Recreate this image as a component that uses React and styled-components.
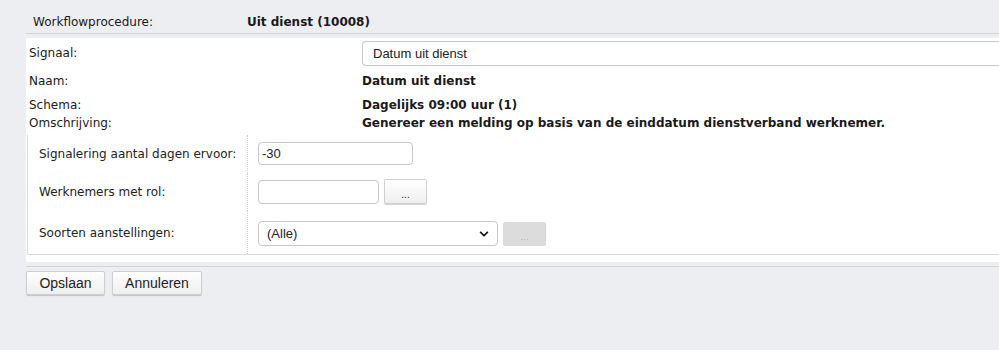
import React from 'react';
import styled, { createGlobalStyle } from 'styled-components';
import { FaChevronDown } from 'react-icons/fa';

const Global = createGlobalStyle`
    html, body{
        margin: 0;
        padding: 0;
        background: #edeef2;
        overflow: hidden;
    }
    body{
        font-family: "DejaVu Sans", Verdana, sans-serif;
        font-size: 12px;
        color: #1a1a1a;
    }
`;

const Page = styled.div`
    width: 999px;
    height: 350px;
    padding-left: 26px;
    box-sizing: border-box;
    overflow: hidden;
`;

const HeaderRow = styled.div`
    display: flex;
    padding: 13px 0 2px 7px;
    line-height: 18px;
    border-bottom: 1px solid #d2d3d6;
`;

const HeaderLabel = styled.div`
    width: 214px;
`;

const Bold = styled.div`
    font-weight: bold;
`;

const Panel = styled.div`
    margin-top: 4px;
    background: #ffffff;
    padding: 2px 0 7px 0;
`;

const InfoRow = styled.div`
    display: flex;
    align-items: center;
    height: ${(p) => p.h}px;
    padding-left: 3px;
`;

const InfoLabel = styled.div`
    width: 333px;
    flex-shrink: 0;
`;

const WideInput = styled.div`
    width: 700px;
    height: 25px;
    box-sizing: border-box;
    border: 1px solid #c8c8c8;
    border-right: none;
    border-radius: 4px 0 0 4px;
    padding-left: 10px;
    display: flex;
    align-items: center;
    font-family: "Liberation Sans", Arial, sans-serif;
    font-size: 13px;
    color: #222;
    flex-shrink: 0;
`;

const SubBox = styled.div`
    margin: 3px 0 0 1px;
    border-left: 1px solid #dcdcdc;
    border-bottom: 1px solid #dcdcdc;
`;

const SubRow = styled.div`
    display: flex;
    align-items: stretch;
`;

const SubLabel = styled.div`
    width: 208px;
    padding-left: 11px;
    flex-shrink: 0;
    display: flex;
    align-items: center;
    color: #222;
    border-right: 1px dotted #d0d0d0;
`;

const SubValue = styled.div`
    display: flex;
    align-items: center;
    gap: 5px;
    padding: ${(p) => p.pad};
    padding-left: 10px;
`;

const TextField = styled.div`
    width: ${(p) => p.w}px;
    height: ${(p) => p.h}px;
    box-sizing: border-box;
    border: 1px solid #c8c8c8;
    border-radius: 4px;
    padding-left: 3px;
    display: flex;
    align-items: center;
    font-family: "Liberation Sans", Arial, sans-serif;
    font-size: 13px;
    color: #222;
`;

const Select = styled(TextField)`
    padding: 0 8px;
    justify-content: space-between;
    svg{
        font-size: 10px;
        color: #111;
    }
`;

const Button = styled.button`
    width: ${(p) => p.w}px;
    height: ${(p) => p.h || 24}px;
    box-sizing: border-box;
    border: 1px solid ${(p) => (p.disabled ? '#dadada' : '#cfcfcf')};
    border-radius: 2px;
    background: ${(p) => (p.disabled ? '#dcdcdc' : 'linear-gradient(#ffffff, #efefef)')};
    box-shadow: ${(p) => (p.disabled ? 'none' : '0 1px 1px rgba(0,0,0,0.18)')};
    font-family: "Liberation Sans", Arial, sans-serif;
    font-size: ${(p) => (p.small ? '10px' : '14px')};
    color: ${(p) => (p.disabled ? '#b8b8b8' : '#222')};
    padding: 0;
    padding-top: ${(p) => (p.small ? '5px' : '0')};
    cursor: pointer;
`;

const Footer = styled.div`
    margin-top: 4px;
    border-top: 1px solid #d2d3d6;
    padding-top: 4px;
    display: flex;
    gap: 7px;
`;

export default function App() {
    return (
        <Page>
            <Global />
            <HeaderRow>
                <HeaderLabel>Workflowprocedure:</HeaderLabel>
                <Bold>Uit dienst (10008)</Bold>
            </HeaderRow>

            <Panel>
                <InfoRow h={26}>
                    <InfoLabel>Signaal:</InfoLabel>
                    <WideInput>Datum uit dienst</WideInput>
                </InfoRow>
                <InfoRow h={30}>
                    <InfoLabel>Naam:</InfoLabel>
                    <Bold>Datum uit dienst</Bold>
                </InfoRow>
                <InfoRow h={18}>
                    <InfoLabel>Schema:</InfoLabel>
                    <Bold>Dagelijks 09:00 uur (1)</Bold>
                </InfoRow>
                <InfoRow h={18}>
                    <InfoLabel>Omschrijving:</InfoLabel>
                    <Bold>Genereer een melding op basis van de einddatum dienstverband werknemer.</Bold>
                </InfoRow>

                <SubBox>
                    <SubRow>
                        <SubLabel>Signalering aantal dagen ervoor:</SubLabel>
                        <SubValue pad="7px 0 8px">
                            <TextField w={155} h={23}>-30</TextField>
                        </SubValue>
                    </SubRow>
                    <SubRow>
                        <SubLabel>Werknemers met rol:</SubLabel>
                        <SubValue pad="6px 0 7px">
                            <TextField w={121} h={24} />
                            <Button w={43} h={25} small>...</Button>
                        </SubValue>
                    </SubRow>
                    <SubRow>
                        <SubLabel>Soorten aanstellingen:</SubLabel>
                        <SubValue pad="10px 0 8px">
                            <Select w={240} h={25}>
                                (Alle)
                                <FaChevronDown />
                            </Select>
                            <Button w={43} h={24} small disabled>...</Button>
                        </SubValue>
                    </SubRow>
                </SubBox>
            </Panel>

            <Footer>
                <Button w={79}>Opslaan</Button>
                <Button w={90}>Annuleren</Button>
            </Footer>
        </Page>
    );
}
